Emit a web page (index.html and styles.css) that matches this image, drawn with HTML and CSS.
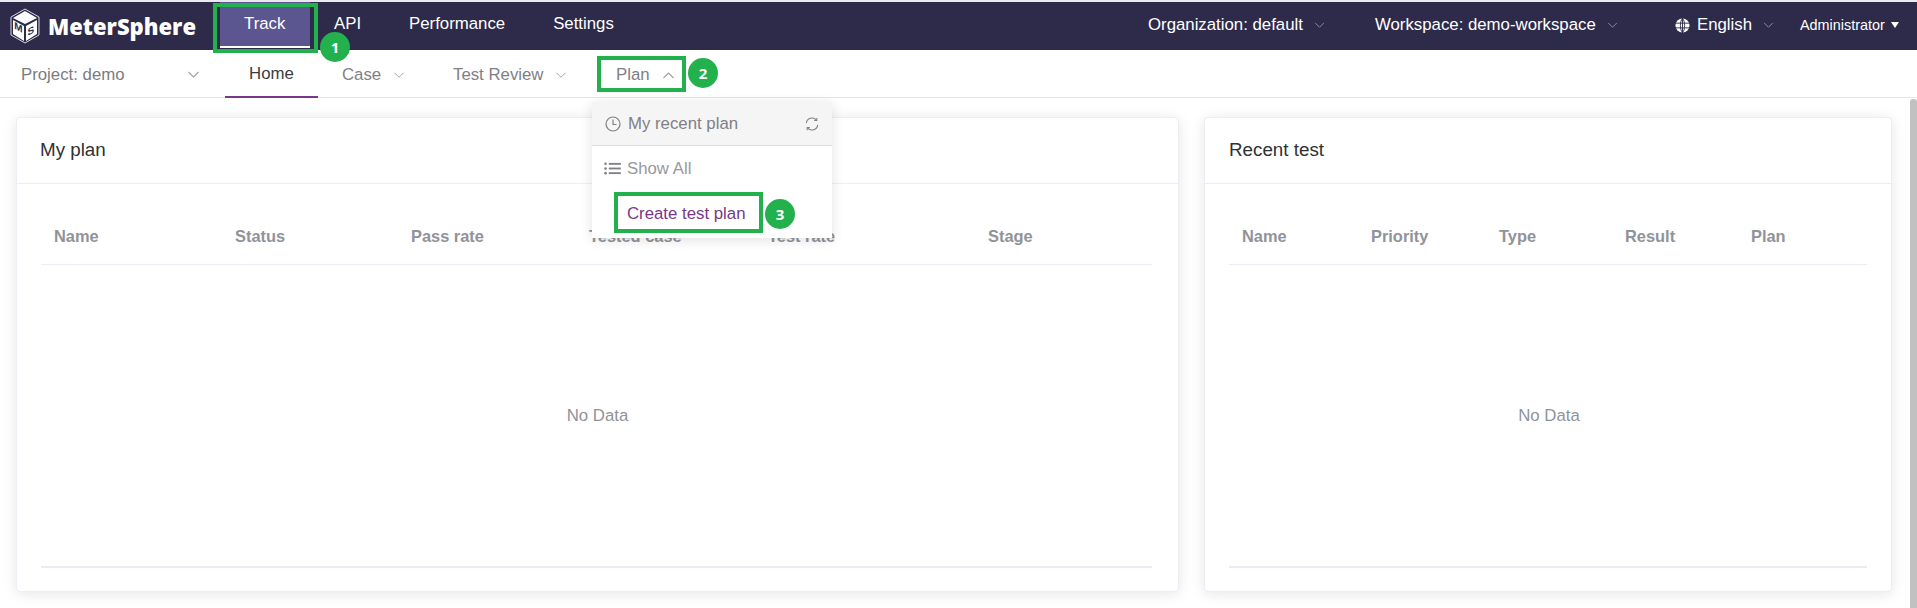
FILE: index.html
```html
<!DOCTYPE html>
<html lang="en">
  <head>
    <meta charset="UTF-8" />
    <meta name="viewport" content="width=device-width, initial-scale=1.0" />
    <title>MeterSphere</title>
    <link rel="stylesheet" href="styles.css">
  </head>
  <body>
    <header class="topbar">
      <div class="logo">
        <svg class="logo-mark" viewBox="0 0 30 36" width="30" height="36">
          <polygon points="15,1 29,9 29,27 15,35 1,27 1,9" fill="none" stroke="#d8d8e0" stroke-width="1" />
          <polygon points="15,3 27,10 15,16 3,10" fill="#fff" />
          <polygon points="3,12 14,18 14,33 3,26" fill="#fff" />
          <polygon points="16,18 27,12 27,26 16,33" fill="#fff" />
          <text class="logo-m" transform="matrix(1 .55 0 1 4.2 20.5)">M</text>
          <text class="logo-s" transform="matrix(1 -.55 0 1 17.5 28)">S</text>
        </svg>
        <span class="logo-text">MeterSphere</span>
      </div>
      <nav class="main-nav">
        <a class="main-item active">Track</a>
        <a class="main-item">API</a>
        <a class="main-item">Performance</a>
        <a class="main-item">Settings</a>
      </nav>
      <div class="top-right">
        <span class="top-item org">
          <span>Organization: default</span>
          <svg class="chev" viewBox="0 0 12 8" width="11" height="7"><path d="M1 1l5 5 5-5" /></svg>
        </span>
        <span class="top-item work">
          <span>Workspace: demo-workspace</span>
          <svg class="chev" viewBox="0 0 12 8" width="11" height="7"><path d="M1 1l5 5 5-5" /></svg>
        </span>
        <span class="top-item lang">
          <svg class="globe" viewBox="0 0 16 16" width="15" height="15">
            <circle cx="8" cy="8" r="7.5" fill="#fff" />
            <path d="M0 5.500h16M0 10.500h16M8 0v16M8 .5C5 3 5 13 8 15.500M8 .5c3 2.500 3 12.500 0 15" fill="none" stroke="#2d2a4a" stroke-width="1" />
          </svg>
          <span>English</span>
          <svg class="chev" viewBox="0 0 12 8" width="11" height="7"><path d="M1 1l5 5 5-5" /></svg>
        </span>
        <span class="top-item admin">
          <span>Administrator</span>
          <i class="caret"></i>
        </span>
      </div>
    </header>

    <nav class="sub-nav">
      <div class="project">
        <span>Project: demo</span>
        <svg class="chev" viewBox="0 0 12 8" width="13" height="8"><path d="M1 1l5 5 5-5" /></svg>
      </div>
      <a class="sub-item active">Home</a>
      <a class="sub-item case"><span>Case</span><svg class="chev" viewBox="0 0 12 8" width="12" height="7"><path d="M1 1l5 5 5-5" /></svg></a>
      <a class="sub-item review"><span>Test Review</span><svg class="chev" viewBox="0 0 12 8" width="12" height="7"><path d="M1 1l5 5 5-5" /></svg></a>
      <a class="sub-item plan"><span>Plan</span><svg class="chev" viewBox="0 0 12 8" width="13" height="8"><path d="M1 7l5-5 5 5" /></svg></a>
    </nav>

    <main class="content">
      <div class="cards">
        <section class="card card-plan">
          <h2 class="card-title">My plan</h2>
          <div class="card-body">
            <div class="table-head">
              <span>Name</span>
              <span>Status</span>
              <span>Pass rate</span>
              <span>Tested case</span>
              <span>Test rate</span>
              <span>Stage</span>
            </div>
            <div class="table-empty">No Data</div>
          </div>
        </section>
        <section class="card card-recent">
          <h2 class="card-title">Recent test</h2>
          <div class="card-body">
            <div class="table-head">
              <span>Name</span>
              <span>Priority</span>
              <span>Type</span>
              <span>Result</span>
              <span>Plan</span>
            </div>
            <div class="table-empty">No Data</div>
          </div>
        </section>
      </div>
      <div class="scrollbar"></div>
    </main>

    <div class="dropdown">
      <div class="drop-head">
        <svg class="drop-clock" viewBox="0 0 16 16" width="16" height="16">
          <circle cx="8" cy="8" r="7" />
          <path d="M8 3.500V8.500H11.500" />
        </svg>
        <span>My recent plan</span>
        <svg class="drop-refresh" viewBox="0 0 16 16" width="14" height="14">
          <path d="M1.500 7A6.500 6.500 0 0 1 13 3.500M14.500 9A6.500 6.500 0 0 1 3 12.500" />
          <path d="M13.500 1v3h-3M2.500 15v-3h3" />
        </svg>
      </div>
      <div class="drop-row">
        <svg class="drop-list" viewBox="0 0 18 14" width="17" height="13">
          <circle cx="1.500" cy="2" r="1.400" />
          <circle cx="1.500" cy="7" r="1.400" />
          <circle cx="1.500" cy="12" r="1.400" />
          <rect x="5" y="1" width="13" height="2" />
          <rect x="5" y="6" width="13" height="2" />
          <rect x="5" y="11" width="13" height="2" />
        </svg>
        <span>Show All</span>
      </div>
      <div class="drop-create">Create test plan</div>
    </div>

    <div class="mark mark-track"></div>
    <div class="mark mark-plan"></div>
    <div class="mark mark-create"></div>
    <div class="badge badge-1">1</div>
    <div class="badge badge-2">2</div>
    <div class="badge badge-3">3</div>
  </body>
</html>
```

FILE: styles.css
```css
* {
  box-sizing: border-box;
}
html,
body {
  height: 608px;
  margin: 0;
  overflow: hidden;
}
body {
  position: relative;
  background: #fff;
  font-family: "Liberation Sans", Arial, sans-serif;
  font-size: 16.800px;
}

/* top bar */
.topbar {
  height: 50px;
  display: flex;
  align-items: stretch;
  background: #2d2a4a;
  border-top: 2px solid #e9e9ee;
  color: #fff;
}
.logo {
  width: 220px;
  display: flex;
  align-items: center;
  padding-left: 10px;
}
.logo-mark {
  flex: none;
}
.logo-m,
.logo-s {
  font-family: "Liberation Sans", sans-serif;
  font-size: 10px;
  font-weight: bold;
  fill: #2d2a4a;
}
.logo-text {
  margin-left: 8px;
  font-family: "Open Sans", sans-serif;
  font-size: 22px;
  font-weight: 800;
  white-space: nowrap;
}
.main-nav {
  display: flex;
}
.main-item {
  height: 46px;
  padding: 0 24px;
  line-height: 44px;
}
.main-item.active {
  width: 90px;
  background: #5b5590;
  border-bottom: 2px solid #fff;
}
.top-right {
  display: flex;
  margin-left: auto;
}
.top-item {
  display: flex;
  align-items: center;
  height: 46px;
  white-space: nowrap;
}
.org {
  width: 227px;
}
.work {
  width: 300px;
}
.lang {
  width: 125px;
}
.admin {
  width: 117px;
  font-size: 14.400px;
}
.chev {
  flex: none;
  margin-left: 11px;
  fill: none;
  stroke: #8f8da3;
  stroke-width: 1.100;
}
.globe {
  flex: none;
  margin-right: 7px;
}
.caret {
  width: 0;
  height: 0;
  margin-left: 6px;
  border: 4.500px solid transparent;
  border-top: 6px solid #fff;
  border-bottom: 0;
}

/* second row */
.sub-nav {
  height: 48px;
  display: flex;
  border-bottom: 1px solid #e6e6e6;
  color: #808084;
}
.project {
  width: 225px;
  display: flex;
  align-items: center;
  justify-content: space-between;
  padding: 2px 25px 0 21px;
  color: #7c7c80;
}
.project .chev,
.sub-item .chev {
  stroke: #a0a0a4;
}
.sub-item {
  height: 48px;
  display: flex;
  align-items: center;
  padding-top: 2px;
  white-space: nowrap;
}
.sub-item .chev {
  margin-left: 12px;
}
.sub-item.active {
  width: 93px;
  justify-content: center;
  color: #3c3c40;
  border-bottom: 2px solid #783887;
}
.case {
  padding-left: 24px;
  width: 135px;
}
.review {
  width: 163px;
}

/* cards */
.content {
  height: 510px;
  display: flex;
  background: #fff;
}
.cards {
  flex: 1;
  display: flex;
  gap: 25px;
  padding: 19px 0 0 16px;
}
.card {
  height: 475px;
  background: #fff;
  border: 1px solid #ebeef5;
  border-radius: 4px;
  box-shadow: 0 2px 14px rgba(0, 0, 0, 0.1);
}
.card-plan {
  width: 1163px;
}
.card-recent {
  width: 688px;
}
.card-title {
  height: 66px;
  margin: 0;
  padding: 0 24px;
  border-bottom: 1px solid #ebeef5;
  color: #303133;
  font-size: 18.800px;
  font-weight: normal;
  line-height: 64px;
}
.card-plan .card-title {
  padding-left: 23px;
}
.card-body {
  padding: 0 24px;
}
.table-head {
  height: 81px;
  display: grid;
  align-items: center;
  padding-left: 13px;
  padding-top: 25px;
  border-bottom: 1px solid #ebeef5;
  color: #909399;
  font-size: 16.400px;
  font-weight: bold;
}
.card-plan .table-head {
  grid-template-columns: 181px 176px 178px 179px 220px 1fr;
}
.card-plan .card-body {
  padding-right: 26px;
}
.card-recent .table-head {
  grid-template-columns: 129px 128px 126px 126px 1fr;
}
.table-empty {
  height: 303px;
  display: flex;
  align-items: center;
  justify-content: center;
  padding-left: 2px;
  border-bottom: 2px solid #ebebf3;
  color: #909399;
}
.scrollbar {
  width: 7px;
  height: 510px;
  margin: 1px 0 0 0;
  background: #c1c1c1;
  border-radius: 3px 3px 0 0;
}

/* open menu */
.dropdown {
  position: absolute;
  left: 592px;
  top: 102px;
  width: 240px;
  height: 136px;
  background: #fff;
  box-shadow: 0 2px 12px rgba(0, 0, 0, 0.12);
  color: #909399;
}
.drop-head {
  height: 44px;
  display: flex;
  align-items: center;
  padding: 0 13px;
  background: #f5f5f5;
  border-bottom: 1px solid #dcdce2;
  color: #808085;
}
.drop-clock {
  margin-right: 7px;
  fill: none;
  stroke: #808085;
  stroke-width: 1.200;
}
.drop-refresh {
  margin-left: auto;
  fill: none;
  stroke: #808085;
  stroke-width: 1.200;
}
.drop-row {
  height: 45px;
  display: flex;
  align-items: center;
  padding-left: 12px;
  color: #98989c;
}
.drop-list {
  margin-right: 6px;
  fill: #808085;
}
.drop-create {
  height: 46px;
  padding-left: 35px;
  color: #783887;
  line-height: 46px;
}

/* green annotations */
.mark {
  position: absolute;
  border: 4px solid #22b14c;
}
.mark-track {
  left: 213px;
  top: 3px;
  width: 105px;
  height: 50px;
}
.mark-plan {
  left: 597px;
  top: 56px;
  width: 89px;
  height: 36px;
}
.mark-create {
  left: 614px;
  top: 192px;
  width: 149px;
  height: 41px;
}
.badge {
  position: absolute;
  width: 30px;
  height: 30px;
  border-radius: 50%;
  background: #22b14c;
  color: #fff;
  font-family: "Open Sans", sans-serif;
  font-size: 15px;
  font-weight: bold;
  line-height: 30px;
  text-align: center;
}
.badge-1 {
  left: 320px;
  top: 32px;
}
.badge-2 {
  left: 688px;
  top: 58px;
}
.badge-3 {
  left: 765px;
  top: 199px;
}
```
